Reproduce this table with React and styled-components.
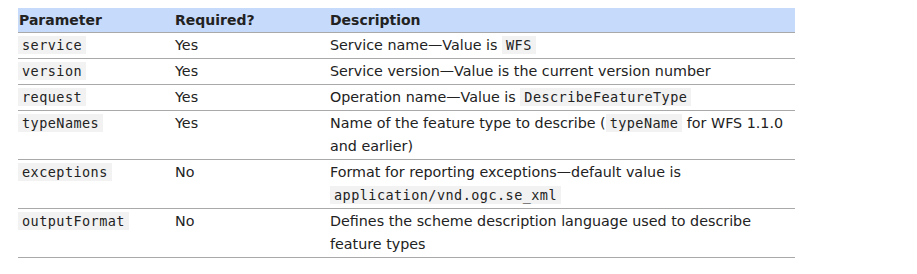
import React from "react";
import styled, { createGlobalStyle } from "styled-components";

const GlobalStyle = createGlobalStyle`
  body {
    margin: 8px 8px 8px 18px;
    background: #ffffff;
    font-family: "DejaVu Sans", "Noto Sans", sans-serif;
    color: #222222;
  }
`;

const Table = styled.table`
  width: 777px;
  border-collapse: collapse;
  font-size: 14.3px;
`;

const HeadCell = styled.th`
  text-align: left;
  font-weight: bold;
  font-size: 14px;
  background-color: rgb(198, 218, 252);
  border-bottom: 1px solid #a9a9a9;
  padding: 0 0 0 ${(p) => (p.$first ? "1px" : "0")};
  height: 24px;
  line-height: 24px;
  width: ${(p) => p.$width || "auto"};
`;

const Cell = styled.td`
  vertical-align: top;
  border-bottom: 1px solid #a9a9a9;
  padding: 1px 0;
  line-height: 23px;
`;

const Code = styled.code`
  font-family: "DejaVu Sans Mono", "Liberation Mono", monospace;
  font-size: 13.5px;
  background-color: #f2f2f2;
  padding: 1px 4px;
  letter-spacing: 0.45px;
`;

const rows = [
  { name: "service", required: "Yes", desc: <>Service name—Value is <Code>WFS</Code></> },
  { name: "version", required: "Yes", desc: "Service version—Value is the current version number" },
  { name: "request", required: "Yes", desc: <>Operation name—Value is <Code>DescribeFeatureType</Code></> },
  {
    name: "typeNames",
    required: "Yes",
    desc: <>Name of the feature type to describe (<Code>typeName</Code> for WFS 1.1.0 and earlier)</>,
  },
  {
    name: "exceptions",
    required: "No",
    desc: <>Format for reporting exceptions—default value is <Code>application/vnd.ogc.se_xml</Code></>,
  },
  {
    name: "outputFormat",
    required: "No",
    desc: "Defines the scheme description language used to describe feature types",
  },
];

export default function App() {
  return (
    <>
      <GlobalStyle />
      <Table>
        <thead>
          <tr>
            <HeadCell $first $width="156px">Parameter</HeadCell>
            <HeadCell $width="155px">Required?</HeadCell>
            <HeadCell>Description</HeadCell>
          </tr>
        </thead>
        <tbody>
          {rows.map((row) => (
            <tr key={row.name}>
              <Cell>
                <Code>{row.name}</Code>
              </Cell>
              <Cell>{row.required}</Cell>
              <Cell>{row.desc}</Cell>
            </tr>
          ))}
        </tbody>
      </Table>
    </>
  );
}
